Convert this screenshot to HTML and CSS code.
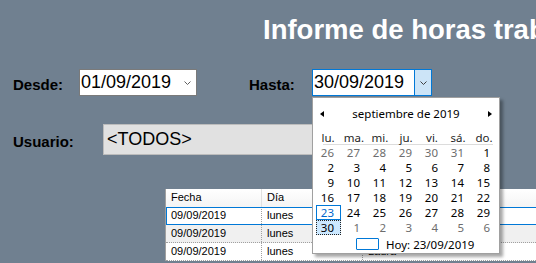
FILE: index.html
```html
<!DOCTYPE html>
<html lang="es">
<head>
    <meta charset="UTF-8">
    <title>Informe de horas trabajadas</title>
    <link rel="stylesheet" href="styles.css">
</head>
<body>
    <h1 class="title">Informe de horas trabajadas</h1>

    <div class="filters">
        <label class="label label-desde">Desde:</label>
        <div class="date-box date-desde">
            <span class="date-text">01/09/2019</span>
            <span class="drop">
                <svg width="7" height="4" viewBox="0 0 7 4"><polyline points="0.5,0.5 3.5,3.5 6.5,0.5" fill="none" stroke="#606060" stroke-width="1"/></svg>
            </span>
        </div>

        <label class="label label-hasta">Hasta:</label>
        <div class="date-wrap">
            <div class="date-box date-hasta">
                <span class="date-text">30/09/2019</span>
                <span class="drop drop-open">
                    <svg width="7" height="4" viewBox="0 0 7 4"><polyline points="0.5,0.5 3.5,3.5 6.5,0.5" fill="none" stroke="#404040" stroke-width="1"/></svg>
                </span>
            </div>

            <div class="calendar">
                <div class="cal-head">
                    <span class="arrow arrow-left"></span>
                    <span class="month">septiembre de 2019</span>
                    <span class="arrow arrow-right"></span>
                </div>
                <div class="cal-names">
                    <span>lu.</span><span>ma.</span><span>mi.</span><span>ju.</span><span>vi.</span><span>sá.</span><span>do.</span>
                </div>
                <div class="cal-line"></div>
                <div class="cal-days">
                    <span class="other">26</span><span class="other">27</span><span class="other">28</span><span class="other">29</span><span class="other">30</span><span class="other">31</span><span>1</span>
                    <span>2</span><span>3</span><span>4</span><span>5</span><span>6</span><span>7</span><span>8</span>
                    <span>9</span><span>10</span><span>11</span><span>12</span><span>13</span><span>14</span><span>15</span>
                    <span>16</span><span>17</span><span>18</span><span>19</span><span>20</span><span>21</span><span>22</span>
                    <span class="today">23</span><span>24</span><span>25</span><span>26</span><span>27</span><span>28</span><span>29</span>
                    <span class="selected">30</span><span class="other">1</span><span class="other">2</span><span class="other">3</span><span class="other">4</span><span class="other">5</span><span class="other">6</span>
                </div>
                <div class="cal-today">
                    <span class="today-box"></span>
                    <span>Hoy: 23/09/2019</span>
                </div>
            </div>
        </div>
    </div>

    <div class="filters user-row">
        <label class="label label-user">Usuario:</label>
        <div class="combo">&lt;TODOS&gt;</div>
    </div>

    <div class="grid">
        <div class="grid-row grid-header">
            <div class="cell col-fecha">Fecha</div>
            <div class="cell col-dia">Día</div>
            <div class="cell col-user">Usuario</div>
        </div>
        <div class="grid-row row-selected">
            <div class="cell col-fecha">09/09/2019</div>
            <div class="cell col-dia">lunes</div>
            <div class="cell col-user">Laura</div>
        </div>
        <div class="grid-row row-alt">
            <div class="cell col-fecha">09/09/2019</div>
            <div class="cell col-dia">lunes</div>
            <div class="cell col-user">Laura</div>
        </div>
        <div class="grid-row">
            <div class="cell col-fecha">09/09/2019</div>
            <div class="cell col-dia">lunes</div>
            <div class="cell col-user">Laura</div>
        </div>
    </div>
</body>
</html>
```

FILE: styles.css
```css
body {
    margin: 0;
    background-color: #708090;
    font-family: "Liberation Sans", Arial, sans-serif;
    height: 263px;
    overflow: hidden;
}

.title {
    margin: 0;
    padding: 15px 0 0 263px;
    font-size: 27.5px;
    line-height: 30px;
    font-weight: bold;
    color: white;
    white-space: nowrap;
}

.filters {
    display: flex;
    align-items: center;
    margin-top: 24px;
    padding-left: 13px;
    height: 27px;
}

.label {
    font-size: 15px;
    font-weight: bold;
    color: #000;
    padding-top: 4px;
}

.label-desde {
    width: 66px;
}

.label-hasta {
    width: 63px;
    margin-left: 52px;
}

.label-user {
    width: 90px;
}

.date-box {
    box-sizing: border-box;
    height: 27px;
    background: white;
    display: flex;
    align-items: center;
    font-size: 18px;
    color: #000;
}

.date-desde {
    width: 118px;
    border: 1px solid #7a7a7a;
}

.date-hasta {
    width: 120px;
    border: 1px solid #0078d7;
}

.date-text {
    flex: 1;
    padding-left: 1px;
}

.drop {
    width: 17px;
    height: 100%;
    display: flex;
    align-items: center;
    justify-content: center;
}

.drop svg {
    display: block;
}

.drop-open {
    box-sizing: border-box;
    background: #cce4f7;
    border-left: 1px solid #0078d7;
}

.date-wrap {
    position: relative;
}

/* month calendar popup */
.calendar {
    position: absolute;
    top: 28px;
    left: 0;
    z-index: 2;
    box-sizing: border-box;
    width: 188px;
    height: 157px;
    padding: 0 2px;
    background: white;
    border: 1px solid #a0a0a0;
    box-shadow: 3px 3px 3px rgba(0, 0, 0, 0.35);
    font-family: "Noto Sans", sans-serif;
    font-size: 11.5px;
    color: #000;
}

.cal-head {
    height: 33px;
    display: flex;
    align-items: flex-start;
    justify-content: space-between;
    padding: 8px 5px 0 5px;
    box-sizing: border-box;
    line-height: 16px;
}

.arrow {
    width: 0;
    height: 0;
    margin-top: 5px;
    border-top: 3.5px solid transparent;
    border-bottom: 3.5px solid transparent;
}

.arrow-left {
    border-right: 4px solid #000;
}

.arrow-right {
    border-left: 4px solid #000;
}

.cal-names {
    display: grid;
    grid-template-columns: repeat(7, 26px);
    height: 13px;
    line-height: 13px;
    text-align: center;
    color: #1e1e1e;
}

.cal-line {
    height: 1px;
    background: #dcdcdc;
    margin: 0 4px 0 8px;
}

.cal-days {
    display: grid;
    grid-template-columns: repeat(7, 26px);
    grid-auto-rows: 15px;
    line-height: 15px;
    text-align: right;
}

.cal-days span {
    padding-right: 7px;
}

.cal-days .other {
    color: #6d6d6d;
}

.cal-days .today {
    margin-left: 1px;
    color: #0066cc;
    box-shadow: inset 0 0 0 1px #0078d7;
}

.cal-days .selected {
    margin-left: 1px;
    background: #cce8ff;
    outline: 1px dotted #222;
    outline-offset: -1px;
}

.cal-today {
    display: flex;
    align-items: center;
    height: 18px;
    padding-left: 41px;
    gap: 7px;
}

.today-box {
    box-sizing: border-box;
    width: 23px;
    height: 12px;
    border: 1px solid #0078d7;
    border-radius: 1px;
}

.user-row {
    margin-top: 28px;
    height: 31px;
}

.combo {
    box-sizing: border-box;
    width: 367px;
    height: 31px;
    padding-left: 3px;
    display: flex;
    align-items: center;
    background: #e1e1e1;
    border: 1px solid #bcbcbc;
    font-size: 18px;
    color: #000;
}

/* data grid */
.grid {
    margin: 34px 0 0 165px;
    width: 420px;
    background: white;
    border-left: 1px solid #a0a0a0;
    font-size: 11px;
}

.grid-row {
    display: flex;
    height: 18px;
    box-sizing: border-box;
    border-bottom: 1px dotted #a0a0a0;
}

.grid-header {
    border-bottom: none;
    background: linear-gradient(#ffffff, #f4f4f4);
}

.grid-header .cell {
    border-right: 1px solid #e0e0e0;
}

.cell {
    box-sizing: border-box;
    padding-left: 5px;
    line-height: 17px;
    border-right: 1px dotted #a0a0a0;
    color: #000;
    white-space: nowrap;
}

.col-fecha {
    width: 96px;
}

.col-dia {
    width: 101px;
}

.col-user {
    flex: 1;
}

.row-selected {
    outline: 1px solid #0078d7;
    outline-offset: -1px;
}

.row-alt {
    background: #f0f0f0;
}
```
